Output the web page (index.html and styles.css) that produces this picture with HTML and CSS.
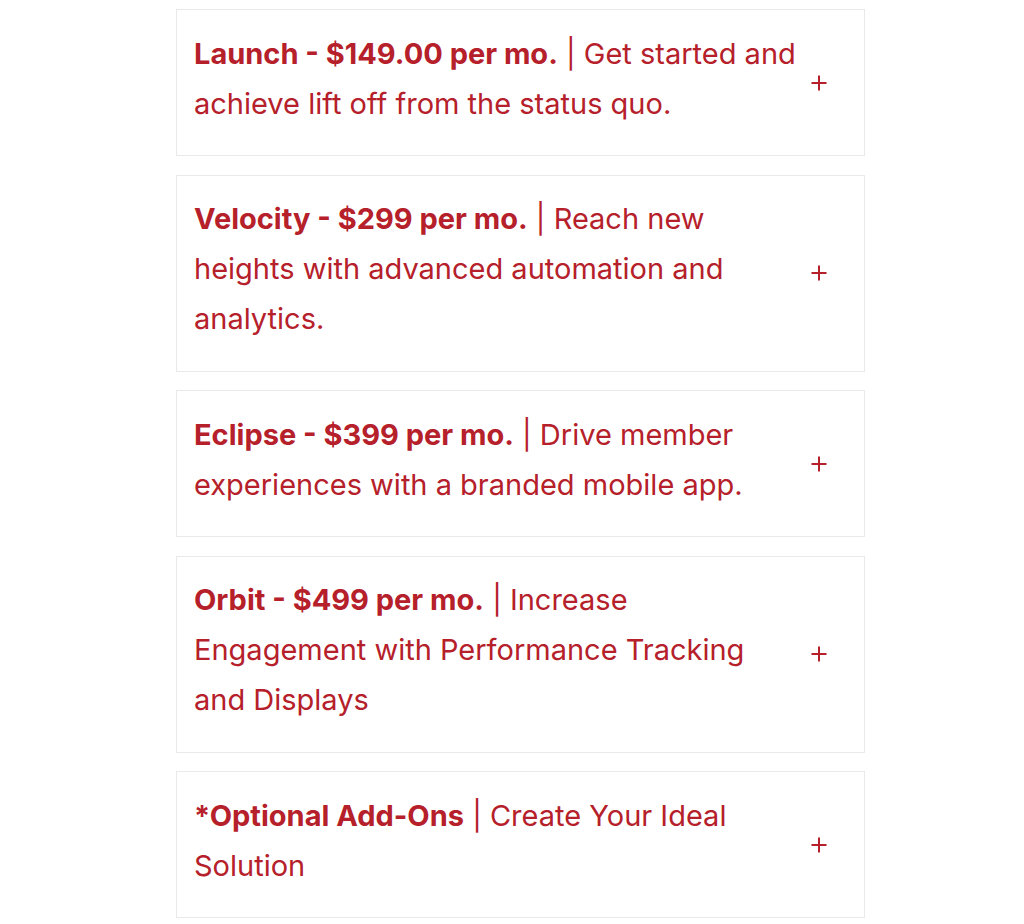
FILE: index.html
```html
<!DOCTYPE html>
<html lang="en">
<head>
    <meta charset="UTF-8">
    <meta name="viewport" content="width=device-width, initial-scale=1.0">
    <title>Plans</title>
    <link rel="stylesheet" href="styles.css">
</head>
<body>
    <div class="plans">
        <div class="plan">
            <p class="plan-title"><strong>Launch - $149.00 per mo.</strong> | Get started and achieve lift off from the status quo.</p>
            <span class="plan-toggle"><svg viewBox="0 0 16 16" width="16" height="16"><path d="M8 0.5v15M0.5 8h15" stroke="currentColor" stroke-width="2"/></svg></span>
        </div>
        <div class="plan">
            <p class="plan-title"><strong>Velocity - $299 per mo.</strong> | Reach new heights with advanced automation and analytics.</p>
            <span class="plan-toggle"><svg viewBox="0 0 16 16" width="16" height="16"><path d="M8 0.5v15M0.5 8h15" stroke="currentColor" stroke-width="2"/></svg></span>
        </div>
        <div class="plan">
            <p class="plan-title"><strong>Eclipse - $399 per mo.</strong> | Drive member experiences with a branded mobile app.</p>
            <span class="plan-toggle"><svg viewBox="0 0 16 16" width="16" height="16"><path d="M8 0.5v15M0.5 8h15" stroke="currentColor" stroke-width="2"/></svg></span>
        </div>
        <div class="plan">
            <p class="plan-title"><strong>Orbit - $499 per mo.</strong> | Increase Engagement with Performance Tracking and Displays</p>
            <span class="plan-toggle"><svg viewBox="0 0 16 16" width="16" height="16"><path d="M8 0.5v15M0.5 8h15" stroke="currentColor" stroke-width="2"/></svg></span>
        </div>
        <div class="plan">
            <p class="plan-title"><strong>*Optional Add-Ons</strong> | Create Your Ideal Solution</p>
            <span class="plan-toggle"><svg viewBox="0 0 16 16" width="16" height="16"><path d="M8 0.5v15M0.5 8h15" stroke="currentColor" stroke-width="2"/></svg></span>
        </div>
    </div>
</body>
</html>
```

FILE: styles.css
```css
body {
    margin: 0;
    background-color: #fff;
    font-family: Inter, "Noto Sans", sans-serif;
    color: #b5202a;
}

.plans {
    width: 689px;
    margin-left: 176px;
    padding-top: 9px;
    display: flex;
    flex-direction: column;
    gap: 18.5px;
}

.plan {
    display: flex;
    align-items: center;
    gap: 11px;
    border: 1px solid #e9e9e9;
    padding: 22.5px 37px 22.5px 17px;
}

.plan-title {
    flex: 0 0 606px;
    margin: -4px 0 4px;
    font-size: 29px;
    font-weight: 400;
    line-height: 50px;
}

.plan-title strong {
    font-weight: 700;
}

.plan-toggle {
    width: 16px;
    height: 16px;
    display: flex;
}
```
